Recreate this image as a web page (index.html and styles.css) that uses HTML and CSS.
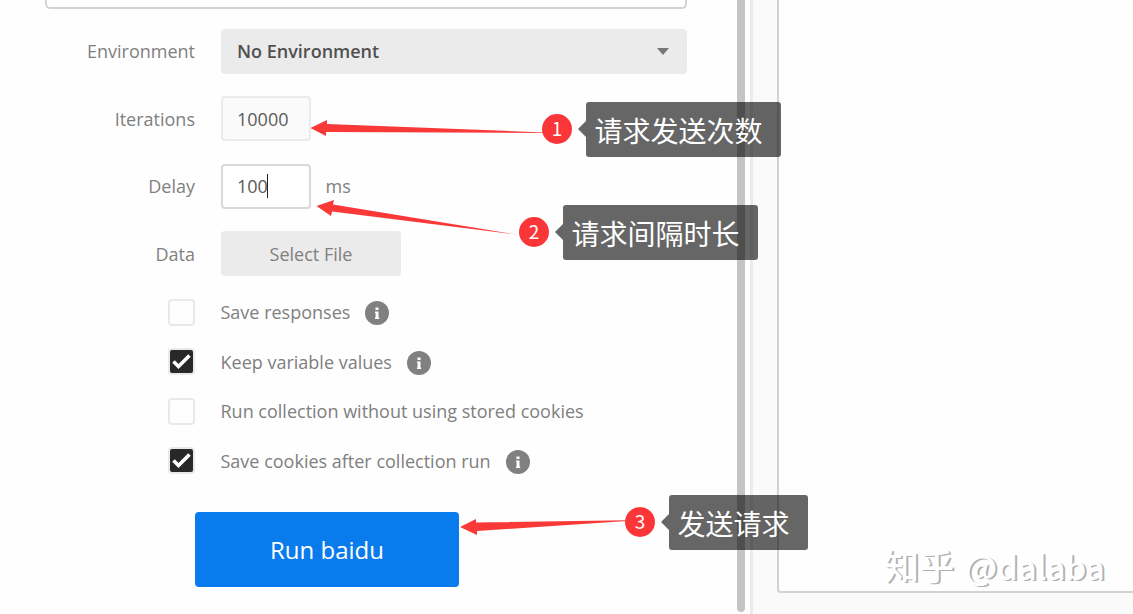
FILE: index.html
```html
<!DOCTYPE html>
<html lang="zh-CN">
<head>
    <meta charset="UTF-8">
    <meta name="viewport" content="width=device-width, initial-scale=1.0">
    <title>Collection Runner</title>
    <link rel="stylesheet" href="styles.css">
</head>
<body>
    <div class="runner">
        <div class="settings">
            <div class="collection-list"></div>

            <div class="row">
                <label class="label">Environment</label>
                <div class="select">
                    <span>No Environment</span>
                    <span class="caret"></span>
                </div>
            </div>
            <div class="row">
                <label class="label">Iterations</label>
                <div class="field">10000</div>
            </div>
            <div class="row">
                <label class="label">Delay</label>
                <div class="field active">100<span class="cursor"></span></div>
                <span class="unit">ms</span>
            </div>
            <div class="row">
                <label class="label">Data</label>
                <div class="file-btn">Select File</div>
            </div>

            <div class="options">
                <div class="option">
                    <span class="checkbox"></span>
                    <span>Save responses</span>
                    <svg class="info" viewBox="0 0 24 24"><circle cx="12" cy="12" r="12"/><path d="M10.500 6.500h3v2.500h-3zM10 10.500h3.500v6h.7v1.500h-4.200v-1.500h.6v-4.500h-.6z"/></svg>
                </div>
                <div class="option">
                    <span class="checkbox checked"><svg viewBox="0 0 23 23"><path d="M3.500 11.500l5 5L19.500 5.500"/></svg></span>
                    <span>Keep variable values</span>
                    <svg class="info" viewBox="0 0 24 24"><circle cx="12" cy="12" r="12"/><path d="M10.500 6.500h3v2.500h-3zM10 10.500h3.500v6h.7v1.500h-4.200v-1.500h.6v-4.500h-.6z"/></svg>
                </div>
                <div class="option">
                    <span class="checkbox"></span>
                    <span>Run collection without using stored cookies</span>
                </div>
                <div class="option">
                    <span class="checkbox checked"><svg viewBox="0 0 23 23"><path d="M3.500 11.500l5 5L19.500 5.500"/></svg></span>
                    <span>Save cookies after collection run</span>
                    <svg class="info" viewBox="0 0 24 24"><circle cx="12" cy="12" r="12"/><path d="M10.500 6.500h3v2.500h-3zM10 10.500h3.500v6h.7v1.500h-4.200v-1.500h.6v-4.500h-.6z"/></svg>
                </div>
            </div>

            <div class="run-btn">Run baidu</div>
        </div>
        <div class="scrollbar"></div>
        <div class="results">
            <div class="results-box"></div>
        </div>
    </div>

    <!-- Step annotations -->
    <svg class="arrows" viewBox="0 0 1133 614">
        <path d="M310.500 128L327 120V124L543 132.400V133L326 132V136Z"/>
        <path d="M316.500 206L334 200L333 204.500L517 234.600L332 211.500L331 216Z"/>
        <path d="M460 527L476 519V522.500L627 520.200V521L477 531V535Z"/>
    </svg>
    <div class="step step-1"><span class="num">1</span><span class="tip">请求发送次数</span></div>
    <div class="step step-2"><span class="num">2</span><span class="tip">请求间隔时长</span></div>
    <div class="step step-3"><span class="num">3</span><span class="tip">发送请求</span></div>

    <div class="watermark">知乎 <span class="author">@dalaba</span></div>
</body>
</html>
```
FILE: styles.css
```css
* {
    box-sizing: border-box;
}
body {
    margin: 0;
    height: 614px;
    overflow: hidden;
    position: relative;
    background: #fefefe;
    color: #808080;
    font-family: "Open Sans", "Noto Sans CJK SC", sans-serif;
    font-size: 18px;
    line-height: 24px;
}
.runner {
    display: flex;
    height: 614px;
}
.settings {
    width: 737px;
    padding-right: 50px;
}
.collection-list {
    height: 9px;
    margin: 0 0 19.7px 45px;
    border: 2px solid #d2d2d2;
    border-top: none;
    border-radius: 0 0 5px 5px;
}
.row {
    display: flex;
    align-items: center;
    height: 45px;
    margin-bottom: 22.5px;
}
.label {
    width: 195px;
    margin-right: 26px;
    text-align: right;
}
.select {
    flex: 1;
    display: flex;
    align-items: center;
    justify-content: space-between;
    height: 45px;
    padding: 0 18px 0 16px;
    background: #ebebeb;
    border-radius: 4px;
    color: #505050;
    font-weight: 600;
}
.caret {
    border: 6px solid transparent;
    border-top: 7px solid #777;
    border-bottom: none;
}
.field {
    display: flex;
    align-items: center;
    width: 90px;
    height: 45px;
    padding-left: 14px;
    background: #fafafa;
    border: 2px solid #ebebeb;
    border-radius: 4px;
    color: #5a5a5a;
}
.field.active {
    background: #fff;
    border-color: #d9d9d9;
}
.cursor {
    width: 1px;
    height: 24px;
    margin-left: -1px;
    background: #222;
}
.unit {
    margin-left: 14.5px;
}
.file-btn {
    width: 180px;
    height: 45px;
    line-height: 46px;
    background: #ebebeb;
    border-radius: 4px;
    text-align: center;
}
.options {
    display: grid;
    gap: 22.5px;
    padding-left: 168px;
}
.option {
    display: flex;
    align-items: center;
    height: 27px;
}
.checkbox {
    width: 27px;
    height: 27px;
    margin-right: 25.5px;
    border: 2px solid #e9e9e9;
    border-radius: 4px;
}
.checkbox.checked {
    background: #282828;
}
.checkbox svg {
    display: block;
    width: 23px;
    height: 23px;
    fill: none;
    stroke: #fff;
    stroke-width: 3.6;
}
.info {
    width: 24px;
    height: 24px;
    margin: 2px 0 0 15px;
    fill: #808080;
}
.info path {
    fill: #fff;
}
.run-btn {
    width: 264px;
    height: 75px;
    margin: 38px 0 0 195px;
    background: #097bed;
    border-radius: 4px;
    color: #fff;
    font-size: 24px;
    line-height: 76px;
    text-align: center;
}
.scrollbar {
    width: 8px;
    height: 612px;
    margin-right: 5px;
    background: #c4c4c4;
    border-radius: 0 0 4px 4px;
}
.results {
    flex: 1;
    padding: 0 0 21px 24px;
    background: #fafafa;
    border-left: 3px solid #ebebeb;
}
.results-box {
    height: 593px;
    background: #fefefe;
    border-left: 2px solid #d2d2d2;
    border-bottom: 2px solid #d2d2d2;
    border-bottom-left-radius: 4px;
}

/* annotations over the form */
.arrows {
    position: absolute;
    top: 0;
    left: 0;
    width: 1133px;
    height: 614px;
    fill: #f93838;
}
.step {
    position: absolute;
    display: flex;
    align-items: flex-start;
    height: 55px;
    font-family: "Noto Sans CJK SC", sans-serif;
    color: #fff;
}
.step-1 {
    left: 542px;
    top: 102px;
}
.step-2 {
    left: 519px;
    top: 205px;
}
.step-3 {
    left: 625px;
    top: 495px;
}
.num {
    width: 30px;
    height: 30px;
    margin: 12px 14px 0 0;
    background: #fb3638;
    border-radius: 50%;
    font-size: 19px;
    line-height: 28px;
    text-align: center;
}
.tip {
    position: relative;
    height: 55px;
    padding: 0 18.5px 0 8.5px;
    background: rgba(0, 0, 0, 0.6);
    border-radius: 3px;
    font-size: 28px;
    line-height: 56px;
}
.tip::before {
    content: "";
    position: absolute;
    left: -8px;
    top: 19px;
    border: 8px solid transparent;
    border-right-color: rgba(0, 0, 0, 0.6);
    border-left: none;
}
.watermark {
    position: absolute;
    left: 884px;
    top: 543px;
    color: #fff;
    font-family: "Noto Sans CJK SC", sans-serif;
    font-size: 35px;
    font-weight: 500;
    line-height: 44px;
    white-space: nowrap;
    text-shadow: 2px 1px 0 #b0b0b0;
}
.watermark .author {
    margin-left: 3px;
    font-size: 33px;
}
```
